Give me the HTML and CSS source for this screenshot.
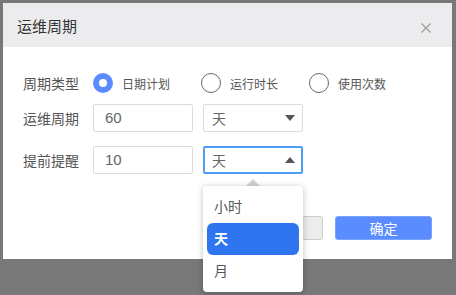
FILE: index.html
```html
<!DOCTYPE html>
<html lang="zh-CN">
<head>
<meta charset="utf-8">
<title>运维周期</title>
<link rel="stylesheet" href="styles.css">
</head>
<body>
<div class="dialog">
  <div class="dialog-header">
    <span class="dialog-title">运维周期</span>
    <svg class="close" width="10" height="10" viewBox="0 0 10 10"><path d="M0.5 0.5 L9.5 9.5 M9.5 0.5 L0.5 9.5" stroke="#9a9a9a" stroke-width="1.1" fill="none"/></svg>
  </div>
  <div class="dialog-body">
    <div class="row row-radio">
      <span class="label">周期类型</span>
      <div class="radio-group">
        <label class="radio"><span class="radio-dot checked"></span><span class="radio-text">日期计划</span></label>
        <label class="radio"><span class="radio-dot"></span><span class="radio-text">运行时长</span></label>
        <label class="radio"><span class="radio-dot"></span><span class="radio-text">使用次数</span></label>
      </div>
    </div>
    <div class="row">
      <span class="label">运维周期</span>
      <div class="input">60</div>
      <div class="select-wrap">
        <div class="select"><span>天</span><span class="arrow down"></span></div>
      </div>
    </div>
    <div class="row">
      <span class="label">提前提醒</span>
      <div class="input">10</div>
      <div class="select-wrap">
        <div class="select focused"><span>天</span><span class="arrow up"></span></div>
        <span class="caret"></span>
        <ul class="menu">
          <li class="menu-item">小时</li>
          <li class="menu-item active">天</li>
          <li class="menu-item">月</li>
        </ul>
      </div>
    </div>
  </div>
  <div class="dialog-footer">
    <button class="btn btn-cancel">取消</button>
    <button class="btn btn-primary">确定</button>
  </div>
</div>
</body>
</html>
```

FILE: styles.css
```css
* { box-sizing: border-box; }
html, body { height: 100%; }
body {
  margin: 0;
  padding-top: 3px;
  background: #787878;
  font-family: "Liberation Sans", "Noto Sans CJK SC", sans-serif;
}
.dialog {
  margin-left: 3px;
  width: 449px;
  height: 256px;
  background: #fff;
  display: flex;
  flex-direction: column;
}
.dialog-header {
  height: 44px;
  flex: none;
  background: #ececee;
  display: flex;
  align-items: center;
  justify-content: space-between;
  padding: 0 21px 0 14px;
}
.dialog-title {
  font-size: 15px;
  color: #333;
}
.close { display: block; margin-top: 5px; }
.dialog-body {
  padding: 22px 0 0 20px;
  display: flex;
  flex-direction: column;
  gap: 14px;
}
.row {
  display: flex;
  align-items: center;
  height: 28px;
}
.row-radio { margin-bottom: -7px; }
.label {
  width: 70px;
  font-size: 14px;
  color: #555;
}
.radio-group {
  display: flex;
  gap: 31px;
}
.radio {
  display: flex;
  align-items: center;
  gap: 9px;
}
.radio-dot {
  width: 20px;
  height: 20px;
  border-radius: 50%;
  border: 1.5px solid #666;
  background: #fff;
}
.radio-dot.checked {
  border: 6px solid #5b8cff;
}
.radio-text {
  font-size: 12px;
  color: #555;
  width: 48px;
}
.input {
  width: 100px;
  height: 28px;
  border: 1px solid #dcdcdc;
  border-radius: 2px;
  padding-left: 11px;
  font-size: 15px;
  line-height: 26px;
  color: #666;
  margin-right: 10px;
}
.select-wrap {
  position: relative;
  width: 100px;
  height: 28px;
}
.select {
  width: 100px;
  height: 28px;
  border: 1px solid #dcdcdc;
  border-radius: 2px;
  display: flex;
  align-items: center;
  justify-content: space-between;
  padding: 0 7px 0 8px;
  font-size: 14px;
  color: #666;
}
.select.focused {
  border: 2px solid #4a9ff8;
  padding: 0 6px 0 7px;
}
.arrow {
  width: 0;
  height: 0;
  border-left: 5.5px solid transparent;
  border-right: 5.5px solid transparent;
}
.arrow.down { border-top: 6px solid #555; }
.arrow.up { border-bottom: 6px solid #555; }
.caret {
  position: absolute;
  top: calc(100% + 5px);
  left: 43px;
  width: 0;
  height: 0;
  border-left: 7px solid transparent;
  border-right: 7px solid transparent;
  border-bottom: 7px solid #d4d4d4;
}
.menu {
  position: absolute;
  top: calc(100% + 12px);
  left: 0;
  width: 100px;
  margin: 0;
  padding: 5px 4px;
  list-style: none;
  background: #fff;
  border-radius: 4px;
  box-shadow: 0 1px 6px rgba(0, 0, 0, 0.25);
  z-index: 2;
}
.menu-item {
  height: 32px;
  line-height: 32px;
  padding-left: 7px;
  font-size: 14px;
  color: #555;
}
.menu-item.active {
  background: #3075f0;
  color: #fff;
  border-radius: 6px;
  font-weight: bold;
}
.dialog-footer {
  margin-top: auto;
  padding: 0 20px 19px;
  display: flex;
  justify-content: flex-end;
  gap: 12px;
}
.btn {
  width: 97px;
  height: 24px;
  border-radius: 3px;
  font-family: inherit;
  font-size: 14px;
  padding: 0;
}
.btn-cancel {
  background: #ececec;
  border: 1px solid #cfcfcf;
  color: #555;
}
.btn-primary {
  background: #5b8cff;
  border: 1px solid #7aa2ff;
  color: #fff;
}
```
